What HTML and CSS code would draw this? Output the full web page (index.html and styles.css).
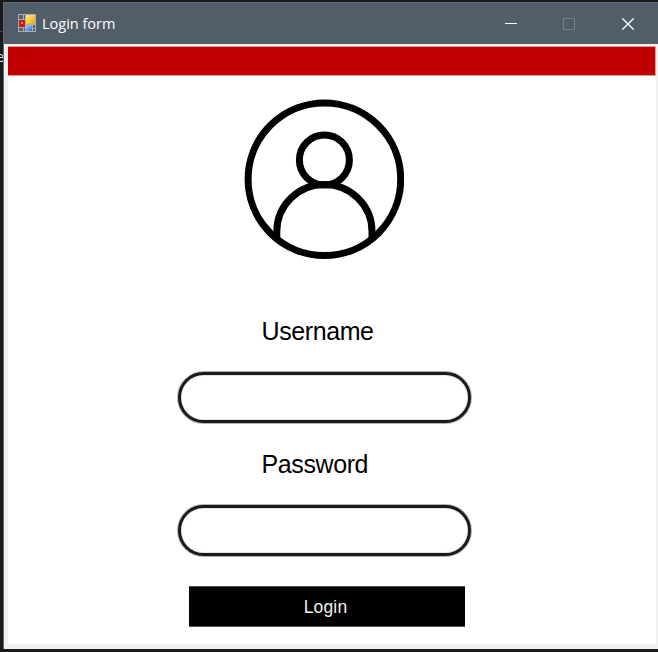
FILE: index.html
```html
<!DOCTYPE html>
<html lang="en">
<head>
<meta charset="utf-8">
<title>Login form</title>
<link rel="stylesheet" href="styles.css">
</head>
<body>
<div class="behind-rule"></div>
<div class="behind-text">e</div>
<div class="window">
  <header class="titlebar">
    <svg class="app-icon" width="18" height="18" viewBox="0 0 18 18">
      <defs>
        <linearGradient id="gold" x2="1" y2="1"><stop offset="0" stop-color="#ffee8a"/><stop offset="1" stop-color="#e6a800"/></linearGradient>
        <linearGradient id="blue" x2="1" y2="1"><stop offset="0" stop-color="#9cc4fa"/><stop offset="1" stop-color="#2f6bd0"/></linearGradient>
      </defs>
      <path fill="#a9adb0" d="M0 0h18v18H0z"/>
      <path fill="#566270" d="M1 1h4v4H1zM6 1h1v4H6zM1 14h4v3H1zM6 14h1v3H6zM15 11h2v3h-2zM15 15h2v2h-2z"/>
      <path fill="#c51d16" d="M1 6h6v7H1z"/>
      <path fill="#ee7d68" d="M3 8h2v2H3z"/>
      <path fill="url(#gold)" d="M8 1h9v9H8z"/>
      <path fill="url(#blue)" d="M8 12h6v5H8z"/>
    </svg>
    <span class="title">Login form</span>
    <div class="controls">
      <svg width="12" height="12" viewBox="0 0 12 12"><path d="M0 5.5h12" stroke="#fff"/></svg>
      <svg width="12" height="12" viewBox="0 0 12 12"><path d="M.5.5h11v11H.5z" fill="none" stroke="#76808d"/></svg>
      <svg width="12" height="12" viewBox="0 0 12 12"><path d="M.3.3l11.4 11.4M11.7.3L.3 11.7" stroke="#fff" stroke-width="1.3"/></svg>
    </div>
  </header>
  <main class="client">
    <div class="banner"></div>
    <form class="form">
      <svg class="avatar" width="160" height="160" viewBox="0 0 160 160" fill="none" stroke="#000" stroke-width="7">
        <circle cx="80.4" cy="80.2" r="76.3"/>
        <circle cx="80.4" cy="61" r="25"/>
        <path d="M32.8 139v-6.5a47.6 47 0 0 1 95.2 0v6.5"/>
      </svg>
      <label class="label" for="user">Username</label>
      <input class="field" id="user" type="text">
      <label class="label" for="pass">Password</label>
      <input class="field" id="pass" type="password">
      <button class="login" type="button">Login</button>
    </form>
  </main>
</div>
</body>
</html>
```
FILE: styles.css
```css
* { box-sizing: border-box; }
body {
  margin: 0;
  height: 652px;
  padding: 2px 0 3px 3px;
  background: #1b1b1c;
  overflow: hidden;
  font-family: "Liberation Sans", Arial, sans-serif;
}
.behind-rule {
  position: absolute;
  left: 0;
  top: 31px;
  width: 3px;
  height: 1px;
  background: #444549;
}
.behind-text {
  position: absolute;
  left: -4px;
  top: 47px;
  font: 15px/18px "Open Sans", sans-serif;
  color: #ddd;
}
.window {
  position: relative;
  display: flex;
  flex-direction: column;
  height: 647px;
  background: #f0f0f0;
  border-left: 1px solid #5d6874;
}
.titlebar {
  display: flex;
  align-items: center;
  height: 42px;
  flex: none;
  padding: 0 24px 0 14px;
  background: #525d6a;
  border-top: 1px solid #5f6b78;
}
.app-icon { margin-top: -1px; }
.title {
  margin-left: 6px;
  font: 14.5px/20px "Open Sans", sans-serif;
  color: #fff;
}
.controls {
  display: flex;
  gap: 46px;
  margin-left: auto;
}
.controls svg { display: block; }
.controls svg:last-child { margin-left: 1px; }
.client {
  flex: 1;
  margin: 2px 2px 5px 4px;
  background: #fff;
}
.banner {
  height: 30px;
  background: #c00000;
  border: solid #e29a98;
  border-width: 1px 1px 1px 0;
}
.form {
  display: flex;
  flex-direction: column;
  width: 295px;
  margin: 23px 0 0 169.5px;
}
.avatar {
  display: block;
  margin-left: 66.5px;
}
.label {
  margin: 57px 0 0 84px;
  font-size: 25px;
  line-height: 30px;
  letter-spacing: -0.4px;
  color: #000;
}
.field {
  width: 293px;
  height: 51px;
  margin: 26px 0 1px 0.5px;
  padding: 0 24px;
  border: 3px solid #1a1a1a;
  border-radius: 26px;
  background: #fff;
  box-shadow: 0 0 0 1px rgba(0, 0, 0, 0.3), inset 0 0 0 1px rgba(0, 0, 0, 0.1);
  font: 18px "Liberation Sans", Arial, sans-serif;
  outline: none;
}
.field + .label { margin-top: 25px; }
.login {
  width: 276px;
  height: 41px;
  margin: 29px 0 0 11.5px;
  padding: 2px 3px 0 0;
  border: 1px solid #555;
  border-width: 1px 0;
  background: #000;
  color: #f0f0f0;
  font: 17.5px "Liberation Sans", Arial, sans-serif;
  letter-spacing: 0.15px;
}
```
